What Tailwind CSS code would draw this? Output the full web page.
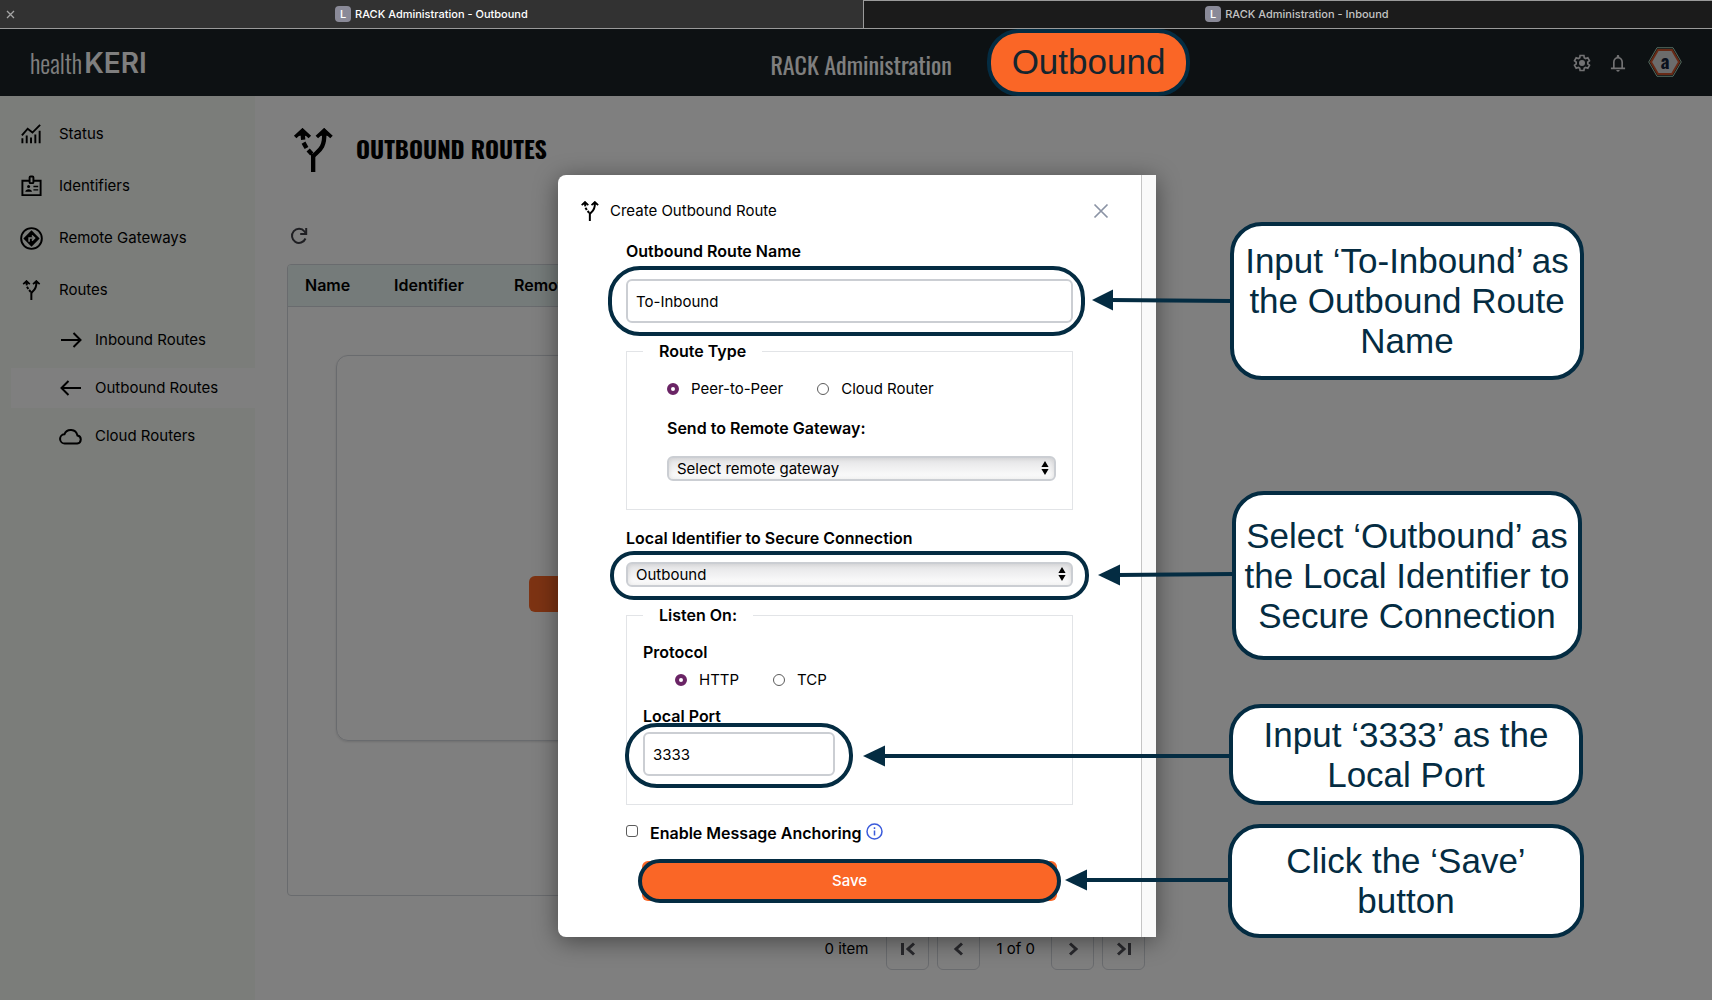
<!DOCTYPE html>
<html lang="en">
<head>
<meta charset="utf-8">
<meta name="viewport" content="width=device-width, initial-scale=1">
<title>RACK Administration - Outbound</title>
<script src="https://cdn.jsdelivr.net/npm/@tailwindcss/browser@4"></script>
</head>
<body class="bg-white font-['Inter',sans-serif] text-[15px] leading-6 text-black">

<svg class="hidden" aria-hidden="true">
  <symbol id="route" viewBox="40 55 118 132">
    <g fill="none" stroke="currentColor" stroke-width="13">
      <path d="M98 187V132"/>
      <path d="M98 139C112 124 134 118 131 68"/>
      <path d="M67 66c0 12 0 16 1 24" />
      <path d="M69 99l9 16" />
      <path d="M83 121l11 12" />
      <path d="M44 82l22-20 22 20M109 82l22-20 22 20" stroke-width="11"/>
    </g>
    <path fill="currentColor" d="M66 56l20 22H46zM131 56l20 22h-40z"/>
  </symbol>
  <symbol id="updown" viewBox="0 0 10 16"><path fill="currentColor" d="M5 1l3.600 6H1.400zM5 15l3.600-6H1.400z"/></symbol>
</svg>

<div class="flex min-h-screen flex-col overflow-hidden">

  <!-- Browser tabs -->
  <div class="flex h-[29px] border-b border-[#9a9a9a] font-medium text-[11px] text-white">
    <div class="relative flex w-[50.4%] items-center justify-center gap-1 bg-[#323232]">
      <button class="absolute left-1.5 text-[#a5a5a5]" aria-label="Close tab"><svg class="size-[9px]" viewBox="0 0 9 9" stroke="currentColor" stroke-width="1.3"><path d="M1 1l7 7M8 1L1 8"/></svg></button>
      <span class="flex size-4 items-center justify-center rounded bg-[#8a8a98]">L</span>
      <span>RACK Administration - Outbound</span>
    </div>
    <div class="flex flex-1 items-center justify-center gap-1 border-t border-l border-[#9a9a9a] bg-[#1b1b1b] pb-px pl-[18px] text-[#c4c4c4]">
      <span class="flex size-4 items-center justify-center rounded bg-[#8a8a98] text-white">L</span>
      <span>RACK Administration - Inbound</span>
    </div>
  </div>

  <div class="relative flex flex-1 flex-col">

    <!-- App header -->
    <header class="relative flex h-[67px] items-center justify-between bg-[#1a2226] px-[30px] text-white">
      <a href="#" class="flex items-center gap-0.5">
        <span class="font-['Oswald','Roboto_Condensed',sans-serif] text-[25px] leading-6 font-light">health</span>
        <span class="text-[28px] leading-6 font-semibold">KERI</span>
      </a>
      <h1 class="absolute left-[45%] pt-0.5 font-['Oswald','Roboto_Condensed',sans-serif] text-2xl font-normal">RACK Administration</h1>
      <div class="flex items-center gap-4 text-zinc-200">
        <button aria-label="Settings"><svg class="size-5" viewBox="0 0 24 24"><path fill="none" stroke="currentColor" stroke-width="2" d="M19.400 13c.1-.7.1-1.300 0-2l2.100-1.600-2-3.700-2.600 1c-.5-.4-1.100-.7-1.700-1L14.800 3h-4.600l-.4 2.700c-.6.3-1.200.6-1.700 1l-2.600-1-2 3.700L5.600 11c-.1.7-.1 1.300 0 2l-2.100 1.600 2 3.700 2.600-1c.5.4 1.100.7 1.700 1l.4 2.700h4.600l.4-2.700c.6-.3 1.200-.6 1.700-1l2.600 1 2-3.700z" transform="translate(-.5 0)"/><circle cx="12" cy="12" r="3.600" fill="currentColor"/></svg></button>
        <button aria-label="Notifications"><svg class="size-5" viewBox="0 0 24 24" fill="currentColor"><path d="M12 22.500c1.100 0 2-.9 2-2h-4c0 1.100.9 2 2 2zm6-5v-6.500c0-3.070-1.630-5.640-4.500-6.320V4c0-.83-.67-1.500-1.500-1.500s-1.500.67-1.500 1.500v.68C7.640 5.360 6 7.920 6 11v6.500H3.500v2h17v-2zm-2 0H8V11c0-2.480 1.510-4.500 4-4.500s4 2.020 4 4.500z"/></svg></button>
        <button class="mb-0.5 ml-1" aria-label="Account"><svg class="h-[30px] w-[34px]" viewBox="0 0 34 30"><path d="M9 .7h16L33.300 15 25 29.300H9L.7 15z" fill="#2a2523" stroke="#a5d3bd" stroke-width="1"/><path d="M10 3h14l7 12-7 12H10L3 15z" fill="#d9d8d8" stroke="#d0552c" stroke-width="2"/><text x="17" y="22" text-anchor="middle" font-family="Oswald, Roboto Condensed, sans-serif" font-weight="700" font-size="19" fill="#15233d">a</text></svg></button>
      </div>
    </header>

    <div class="flex flex-1">
      <!-- Sidebar -->
      <nav class="w-[255px] shrink-0 bg-[#f6faf4] pt-3 text-black">
        <a href="#" class="flex h-[52px] items-center gap-4 pl-5"><svg class="size-[23px]" viewBox="0 0 24 24" fill="none" stroke="currentColor" stroke-width="2"><path d="M2.500 21v-5M7 21v-8M11.500 21v-6M16 21v-9M20.500 21V8"/><path d="M2 13l6-7 5 4 8-8"/></svg>Status</a>
        <a href="#" class="flex h-[52px] items-center gap-4 pl-5"><svg class="size-[23px]" viewBox="0 0 24 24" fill="none" stroke="currentColor" stroke-width="2"><path d="M10 6H2.500v15h19V6H14"/><rect x="10" y="1.500" width="4" height="7" rx="1"/><path d="M14 12h5M14 15.500h5" stroke-width="1.500"/><circle cx="9" cy="12" r="1.600" fill="currentColor" stroke="none"/><path d="M5.500 17.500c0-3.500 7-3.500 7 0z" fill="currentColor" stroke="none"/></svg>Identifiers</a>
        <a href="#" class="flex h-[52px] items-center gap-4 pl-5"><svg class="size-[23px]" viewBox="0 0 24 24"><circle cx="12" cy="12" r="10.800" fill="none" stroke="currentColor" stroke-width="2"/><path fill="currentColor" d="M12 3.500l8.500 8.500-8.500 8.500L3.500 12z"/><path fill="none" stroke="#f6faf4" stroke-width="1.600" d="M9.500 15.500v-4h5M12.500 8.800l2.700 2.700-2.700 2.700"/></svg>Remote Gateways</a>
        <a href="#" class="flex h-[52px] items-center gap-4 pl-5"><svg class="h-5 w-[23px]"><use href="#route"/></svg>Routes</a>
        <a href="#" class="mt-1 ml-[11px] flex h-10 items-center gap-3 pl-12"><svg class="size-6" viewBox="0 0 24 24" fill="none" stroke="currentColor" stroke-width="2"><path d="M2 12h19M14.500 5l7 7-7 7"/></svg>Inbound Routes</a>
        <a href="#" class="my-2 ml-[11px] flex h-10 items-center gap-3 bg-white pl-12"><svg class="size-6" viewBox="0 0 24 24" fill="none" stroke="currentColor" stroke-width="2"><path d="M22 12H3M9.500 5l-7 7 7 7"/></svg>Outbound Routes</a>
        <a href="#" class="ml-[11px] flex h-10 items-center gap-3 pl-12"><svg class="size-6" viewBox="0 0 24 24" fill="none" stroke="currentColor" stroke-width="2"><path d="M6 19.500a4.600 4.600 0 0 1-.6-9.200 6.800 6.800 0 0 1 13 1.100 4.100 4.100 0 0 1-.2 8.100z"/></svg>Cloud Routers</a>
      </nav>

      <!-- Routes page -->
      <main class="flex-1 px-8 pt-8">
        <div class="max-w-[858px]">
          <div class="flex h-11 items-center gap-5 pl-1">
            <svg class="h-11 w-[45px]"><use href="#route"/></svg>
            <h2 class="-mt-1 font-['Oswald','Roboto_Condensed',sans-serif] text-2xl font-bold">OUTBOUND ROUTES</h2>
          </div>
          <button class="mt-[55px] ml-[3px] block text-[#3f3f46]" aria-label="Refresh"><svg class="size-[18px]" viewBox="0 0 18 18" fill="none" stroke="currentColor" stroke-width="2"><path d="M15.500 11.500A7 7 0 1 1 14.500 4.500L16 6.500"/><path d="M16.200 1v6h-6"/></svg></button>
          <section class="mt-[19px] h-[632px] overflow-hidden rounded border border-[#d3d6dc]">
            <table class="w-full text-left text-base">
              <thead>
                <tr class="h-[41px] border-b border-[#d3d6dc] bg-[#eaf6f4]">
                  <th scope="col" class="w-[89px] pl-[17px] font-semibold">Name</th>
                  <th scope="col" class="w-[120px] pl-[17px] font-semibold">Identifier</th>
                  <th scope="col" class="pl-[17px] font-semibold">Remote</th>
                </tr>
              </thead>
            </table>
            <div class="mx-12 mt-12 flex h-[386px] items-center justify-center rounded-xl border border-[#d3d6dc] pt-[92px] shadow-sm">
              <button class="h-9 w-[374px] rounded-md bg-[#fa6626]" aria-label="Create route"></button>
            </div>
          </section>
          <div class="mt-[31px] flex items-center justify-end gap-2">
            <span class="pr-2.5">0 item</span>
            <button class="flex h-[43px] w-[43px] items-center justify-center rounded-md border border-[#d3d6dc] text-[#52525b]" aria-label="First page"><svg class="size-4" viewBox="0 0 16 16" fill="none" stroke="currentColor" stroke-width="3"><path d="M2.500 2v12M14 2.500L8 8l6 5.500"/></svg></button>
            <button class="flex h-[43px] w-[43px] items-center justify-center rounded-md border border-[#d3d6dc] text-[#52525b]" aria-label="Previous page"><svg class="size-4" viewBox="0 0 16 16" fill="none" stroke="currentColor" stroke-width="3"><path d="M11 2.500L5 8l6 5.500"/></svg></button>
            <span class="px-2">1 of 0</span>
            <button class="flex h-[43px] w-[43px] items-center justify-center rounded-md border border-[#d3d6dc] text-[#52525b]" aria-label="Next page"><svg class="size-4" viewBox="0 0 16 16" fill="none" stroke="currentColor" stroke-width="3"><path d="M5 2.500L11 8l-6 5.500"/></svg></button>
            <button class="flex h-[43px] w-[43px] items-center justify-center rounded-md border border-[#d3d6dc] text-[#52525b]" aria-label="Last page"><svg class="size-4" viewBox="0 0 16 16" fill="none" stroke="currentColor" stroke-width="3"><path d="M13.500 2v12M2 2.500L8 8l-6 5.500"/></svg></button>
          </div>
        </div>
      </main>
    </div>

    <!-- Backdrop and dialog -->
    <div class="absolute inset-0 flex items-start justify-center bg-black/50 pt-[146px] pl-0.5">
      <div role="dialog" aria-labelledby="dlg-title" class="relative flex w-[598px] rounded-l-lg bg-white shadow-[0_4px_24px_rgba(0,0,0,0.45)]">
        <form class="flex-1 pt-6 pb-9 pl-[22px]">
          <div class="flex h-6 items-center pr-8">
            <svg class="h-5 w-5"><use href="#route"/></svg>
            <h2 id="dlg-title" class="ml-2.5 flex-1">Create Outbound Route</h2>
            <button type="button" class="text-[#8b93a5]" aria-label="Close"><svg class="size-4" viewBox="0 0 16 16" stroke="currentColor" stroke-width="1.700"><path d="M1.500 1.500l13 13M14.500 1.500l-13 13"/></svg></button>
          </div>

          <div class="mt-4 ml-[46px] w-[447px]">
            <label for="route-name" class="block text-base font-semibold">Outbound Route Name</label>
            <div class="relative mt-4">
              <input id="route-name" type="text" value="To-Inbound" class="block h-11 w-full rounded-md border-2 border-[#cbced3] px-2 outline-none">
              <span class="pointer-events-none absolute -inset-y-[13px] -right-3 -left-[18px] rounded-[32px] border-4 border-[#042c42]"></span>
            </div>

            <fieldset class="mt-4 border border-[#e2e4e7] px-4 pb-7">
              <legend class="px-4 text-base font-semibold">Route Type</legend>
              <div class="flex gap-[34px] pt-3.5 pl-6">
                <label class="flex items-center gap-3"><input type="radio" name="type" checked class="size-3 appearance-none rounded-full border border-[#5b5b5b] bg-white checked:border-4 checked:border-[#6a2465]">Peer-to-Peer</label>
                <label class="flex items-center gap-3"><input type="radio" name="type" class="size-3 appearance-none rounded-full border border-[#5b5b5b] bg-white checked:border-4 checked:border-[#6a2465]">Cloud Router</label>
              </div>
              <label for="gateway" class="mt-[15px] block pl-6 text-base font-semibold">Send to Remote Gateway:</label>
              <div class="relative mt-4 ml-6">
                <select id="gateway" class="block h-[25px] w-full appearance-none rounded-md border-2 border-[#cbced3] bg-linear-to-b from-[#e3e3e5] to-white pr-6 pl-2 leading-5 shadow-[inset_0_0_5px_rgba(0,0,0,0.12)]"><option>Select remote gateway</option></select>
                <svg class="pointer-events-none absolute top-1 right-1.5 h-4 w-2.5"><use href="#updown"/></svg>
              </div>
            </fieldset>

            <label for="identifier" class="mt-4 block text-base font-semibold">Local Identifier to Secure Connection</label>
            <div class="relative mt-3">
              <select id="identifier" class="block h-[25px] w-full appearance-none rounded-md border-2 border-[#cbced3] bg-linear-to-b from-[#e3e3e5] to-white pr-6 pl-2 leading-5 shadow-[inset_0_0_5px_rgba(0,0,0,0.12)]"><option>Outbound</option></select>
              <svg class="pointer-events-none absolute top-1 right-1.5 h-4 w-2.5"><use href="#updown"/></svg>
              <span class="pointer-events-none absolute -inset-x-4 -top-[11px] -bottom-[13px] rounded-[24px] border-4 border-[#042c42]"></span>
            </div>

            <fieldset class="mt-4 border border-[#e2e4e7] px-4 pb-7">
              <legend class="px-4 text-base font-semibold">Listen On:</legend>
              <div class="pt-[13px] text-base font-semibold">Protocol</div>
              <div class="mt-1 flex gap-[34px] pl-8">
                <label class="flex items-center gap-3"><input type="radio" name="protocol" checked class="size-3 appearance-none rounded-full border border-[#5b5b5b] bg-white checked:border-4 checked:border-[#6a2465]">HTTP</label>
                <label class="flex items-center gap-3"><input type="radio" name="protocol" class="size-3 appearance-none rounded-full border border-[#5b5b5b] bg-white checked:border-4 checked:border-[#6a2465]">TCP</label>
              </div>
              <label for="port" class="mt-3 block text-base font-semibold">Local Port</label>
              <div class="relative mt-1 w-48">
                <input id="port" type="text" value="3333" class="block h-11 w-full rounded-md border-2 border-[#cbced3] px-2 outline-none">
                <span class="pointer-events-none absolute -inset-x-[18px] -top-[9px] -bottom-3 rounded-[32px] border-4 border-[#042c42]"></span>
              </div>
            </fieldset>

            <div class="mt-4 flex items-start">
              <input id="anchoring" type="checkbox" class="mt-1 size-3 appearance-none rounded-[3px] border border-[#5b5b5b] bg-white checked:bg-[#6a2465]">
              <label for="anchoring" class="ml-3 text-base font-semibold">Enable Message Anchoring</label>
              <svg class="mt-0.5 ml-1 size-[17px] text-[#3b5bdb]" viewBox="0 0 17 17" fill="none" stroke="currentColor" stroke-width="1.500"><circle cx="8.500" cy="8.500" r="7.500"/><path d="M8.500 7.500v5M8.500 4.300v1.700"/></svg>
            </div>

            <div class="relative mx-4 mt-4">
              <button type="button" class="block h-10 w-full rounded-md bg-[#fa6626] font-medium text-white">Save</button>
              <span class="pointer-events-none absolute -inset-x-1 -inset-y-0.5 rounded-[22px] border-4 border-[#042c42]"></span>
            </div>
          </div>
        </form>
        <div class="w-[15px] border-l border-[#c4c4c4] bg-[#f9f9f9]"></div>

        <!-- Arrows from the notes to the form fields -->
        <svg class="pointer-events-none absolute top-0 -left-px h-full w-[680px] overflow-visible text-[#042c42]" viewBox="0 0 680 762" preserveAspectRatio="xMinYMin" fill="currentColor" stroke="currentColor" aria-hidden="true">
          <path d="M553 125l122 1" stroke-width="4"/><path stroke="none" d="M535 125l21-10.500v21z"/>
          <path d="M560 400l117-1" stroke-width="4"/><path stroke="none" d="M541 400l22-10.500v21z"/>
          <path d="M325 581h349" stroke-width="4"/><path stroke="none" d="M306 581l22-10.500v21z"/>
          <path d="M527 705h146" stroke-width="4"/><path stroke="none" d="M508 705l22-10.500v21z"/>
        </svg>

        <!-- Notes -->
        <p class="absolute top-[47px] left-[672px] flex h-[158px] w-[354px] items-center justify-center rounded-[32px] border-4 border-[#042c42] bg-white text-center font-['Liberation_Sans',sans-serif] text-[35px] leading-10 text-[#042c42]">Input ‘To-Inbound’ as<br>the Outbound Route<br>Name</p>
        <p class="absolute top-[316px] left-[674px] flex h-[169px] w-[350px] items-center justify-center rounded-[32px] border-4 border-[#042c42] bg-white text-center font-['Liberation_Sans',sans-serif] text-[35px] leading-10 text-[#042c42]">Select ‘Outbound’ as<br>the Local Identifier to<br>Secure Connection</p>
        <p class="absolute top-[529px] left-[671px] flex h-[101px] w-[354px] items-center justify-center rounded-[32px] border-4 border-[#042c42] bg-white text-center font-['Liberation_Sans',sans-serif] text-[35px] leading-10 text-[#042c42]">Input ‘3333’ as the<br>Local Port</p>
        <p class="absolute top-[649px] left-[670px] flex h-[114px] w-[356px] items-center justify-center rounded-[32px] border-4 border-[#042c42] bg-white text-center font-['Liberation_Sans',sans-serif] text-[35px] leading-10 text-[#042c42]">Click the ‘Save’<br>button</p>
      </div>
    </div>

    <!-- Mode badge over the header -->
    <div class="absolute top-0 left-[987px] flex h-[67px] w-[203px] items-center justify-center rounded-[32px] border-4 border-[#042c42] bg-[#fa6626] pb-0.5 font-['Liberation_Sans',sans-serif] text-[35px] leading-10 text-[#15252e]">Outbound</div>
  </div>
</div>
</body>
</html>
